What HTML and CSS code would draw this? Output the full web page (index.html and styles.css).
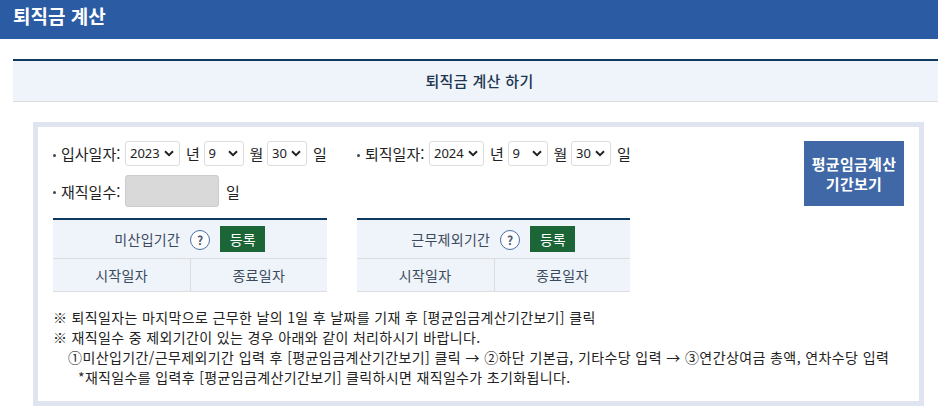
FILE: index.html
```html
<!DOCTYPE html>
<html lang="ko">
<head>
  <meta charset="UTF-8">
  <title>퇴직금 계산</title>
  <link rel="stylesheet" href="styles.css">
</head>
<body>
  <header class="page-header">퇴직금 계산</header>

  <section class="calc">
    <h2 class="calc-title">퇴직금 계산 하기</h2>

    <div class="calc-box">
      <div class="date-area">
        <div class="date-fields">
          <div class="date-row">
            <div class="date-group">
              <span class="field-label">입사일자:</span>
              <select class="sel-year"><option>2023</option></select>
              <span class="unit">년</span>
              <select class="sel-small"><option>9</option></select>
              <span class="unit">월</span>
              <select class="sel-small"><option>30</option></select>
              <span class="unit">일</span>
            </div>
            <div class="date-group">
              <span class="field-label">퇴직일자:</span>
              <select class="sel-year"><option>2024</option></select>
              <span class="unit">년</span>
              <select class="sel-small"><option>9</option></select>
              <span class="unit">월</span>
              <select class="sel-small"><option>30</option></select>
              <span class="unit">일</span>
            </div>
          </div>
          <div class="date-row days-row">
            <span class="field-label">재직일수:</span>
            <input type="text" class="days-input" disabled>
            <span class="unit">일</span>
          </div>
        </div>
        <button type="button" class="avg-btn">평균임금계산<br>기간보기</button>
      </div>

      <div class="period-tables">
        <div class="period">
          <div class="period-head">
            <span>미산입기간</span>
            <span class="help">?</span>
            <button type="button" class="reg-btn">등록</button>
          </div>
          <div class="period-cols">
            <div>시작일자</div>
            <div>종료일자</div>
          </div>
        </div>
        <div class="period">
          <div class="period-head">
            <span>근무제외기간</span>
            <span class="help">?</span>
            <button type="button" class="reg-btn">등록</button>
          </div>
          <div class="period-cols">
            <div>시작일자</div>
            <div>종료일자</div>
          </div>
        </div>
      </div>

      <div class="notes">
        <p>※ 퇴직일자는 마지막으로 근무한 날의 1일 후 날짜를 기재 후 [평균임금계산기간보기] 클릭</p>
        <p>※ 재직일수 중 제외기간이 있는 경우 아래와 같이 처리하시기 바랍니다.</p>
        <p class="indent-1">①미산입기간/근무제외기간 입력 후 [평균임금계산기간보기] 클릭 → ②하단 기본급, 기타수당 입력 → ③연간상여금 총액, 연차수당 입력</p>
        <p class="indent-2">*재직일수를 입력후 [평균임금계산기간보기] 클릭하시면 재직일수가 초기화됩니다.</p>
      </div>
    </div>
  </section>
</body>
</html>
```

FILE: styles.css
```css
* {
  box-sizing: border-box;
}

body {
  margin: 0;
  font-family: "Noto Sans CJK KR", "Noto Sans", sans-serif;
  font-size: 14px;
  color: #222;
  background: #fff;
}

.page-header {
  height: 39px;
  line-height: 31px;
  padding-left: 13px;
  background: #2a5ba3;
  color: #fff;
  font-size: 19px;
  font-weight: 700;
}

.calc {
  padding: 20px 0 0 13px;
}

.calc-title {
  height: 43px;
  margin: 0;
  padding-left: 8px;
  line-height: 39px;
  text-align: center;
  font-size: 15px;
  font-weight: 500;
  letter-spacing: 0.35px;
  color: #1c3550;
  background: #eff3fa;
  border-top: 2px solid #0f3a5f;
  border-bottom: 1px solid #ddd;
}

.calc-box {
  width: 891px;
  height: 284px;
  margin: 20px 0 0 20px;
  padding: 14px 15px 0;
  border: 5px solid #e0e4f0;
}

/* Dates */
.date-area {
  display: flex;
  justify-content: space-between;
}

.date-row {
  display: flex;
  align-items: center;
  height: 25px;
  font-size: 15px;
}

.days-row {
  margin-top: 9px;
  height: 32px;
}

.date-group {
  display: flex;
  align-items: center;
  width: 304px;
}

.field-label {
  width: 72px;
  padding-left: 8px;
  position: relative;
  white-space: nowrap;
}

.field-label::before {
  content: "";
  position: absolute;
  left: 0;
  top: 50%;
  width: 3px;
  height: 3px;
  border-radius: 50%;
  background: #444;
}

.unit {
  width: 12.5px;
  margin: 0 5px 0 6px;
  white-space: nowrap;
}

select {
  appearance: none;
  height: 25px;
  padding: 0 0 1px 4px;
  border: 1px solid #ddd;
  border-radius: 3px;
  background: #fff url("data:image/svg+xml,%3Csvg xmlns='http://www.w3.org/2000/svg' width='10' height='7'%3E%3Cpath d='M1 1.2l4 4 4-4' fill='none' stroke='%23222' stroke-width='2'/%3E%3C/svg%3E") no-repeat right 5px center;
  font-family: "Noto Sans", sans-serif;
  font-size: 13px;
  color: #222;
}

.sel-year {
  width: 55px;
}

.sel-small {
  width: 40px;
}

.days-input {
  width: 94px;
  height: 32px;
  margin-right: 1px;
  border: 1px solid #ccc;
  border-radius: 3px;
  background: #d9d9d9;
}

.avg-btn {
  width: 100px;
  height: 65px;
  padding: 0;
  border: none;
  background: #4067a6;
  color: #fff;
  font-family: inherit;
  font-size: 15px;
  font-weight: 700;
  letter-spacing: 0.3px;
  line-height: 20px;
}

/* Period tables */
.period-tables {
  display: flex;
  gap: 30px;
  margin-top: 11px;
}

.period {
  width: 273.5px;
  background: #eff3fa;
  border-top: 2px solid #0f3a5f;
  color: #3b4a5c;
  letter-spacing: 0.3px;
}

.period-head {
  display: flex;
  align-items: center;
  justify-content: center;
  gap: 10px;
  height: 39px;
  border-bottom: 1px solid #ddd;
}

.help {
  width: 20px;
  height: 20px;
  margin-top: 1px;
  border: 1px solid #4a6fa5;
  border-radius: 50%;
  background: #fff;
  text-align: center;
  font-size: 12px;
  font-weight: 700;
  line-height: 18px;
  color: #4a5a75;
}

.reg-btn {
  width: 45px;
  height: 26px;
  padding: 0;
  border: none;
  background: #1b6537;
  color: #fff;
  font-family: inherit;
  font-size: 14px;
}

.period-cols {
  display: grid;
  grid-template-columns: 137px 1fr;
  height: 33px;
  line-height: 32px;
  text-align: center;
  border-bottom: 1px solid #ddd;
}

.period-cols div + div {
  border-left: 1px solid #ddd;
}

/* Notes */
.notes {
  margin-top: 15px;
  line-height: 20px;
  font-size: 14px;
  letter-spacing: 0.35px;
}

.notes p {
  margin: 0;
  white-space: nowrap;
}

.indent-1 {
  padding-left: 15px;
  letter-spacing: 0.4px;
}

.indent-2 {
  padding-left: 25px;
}
```
